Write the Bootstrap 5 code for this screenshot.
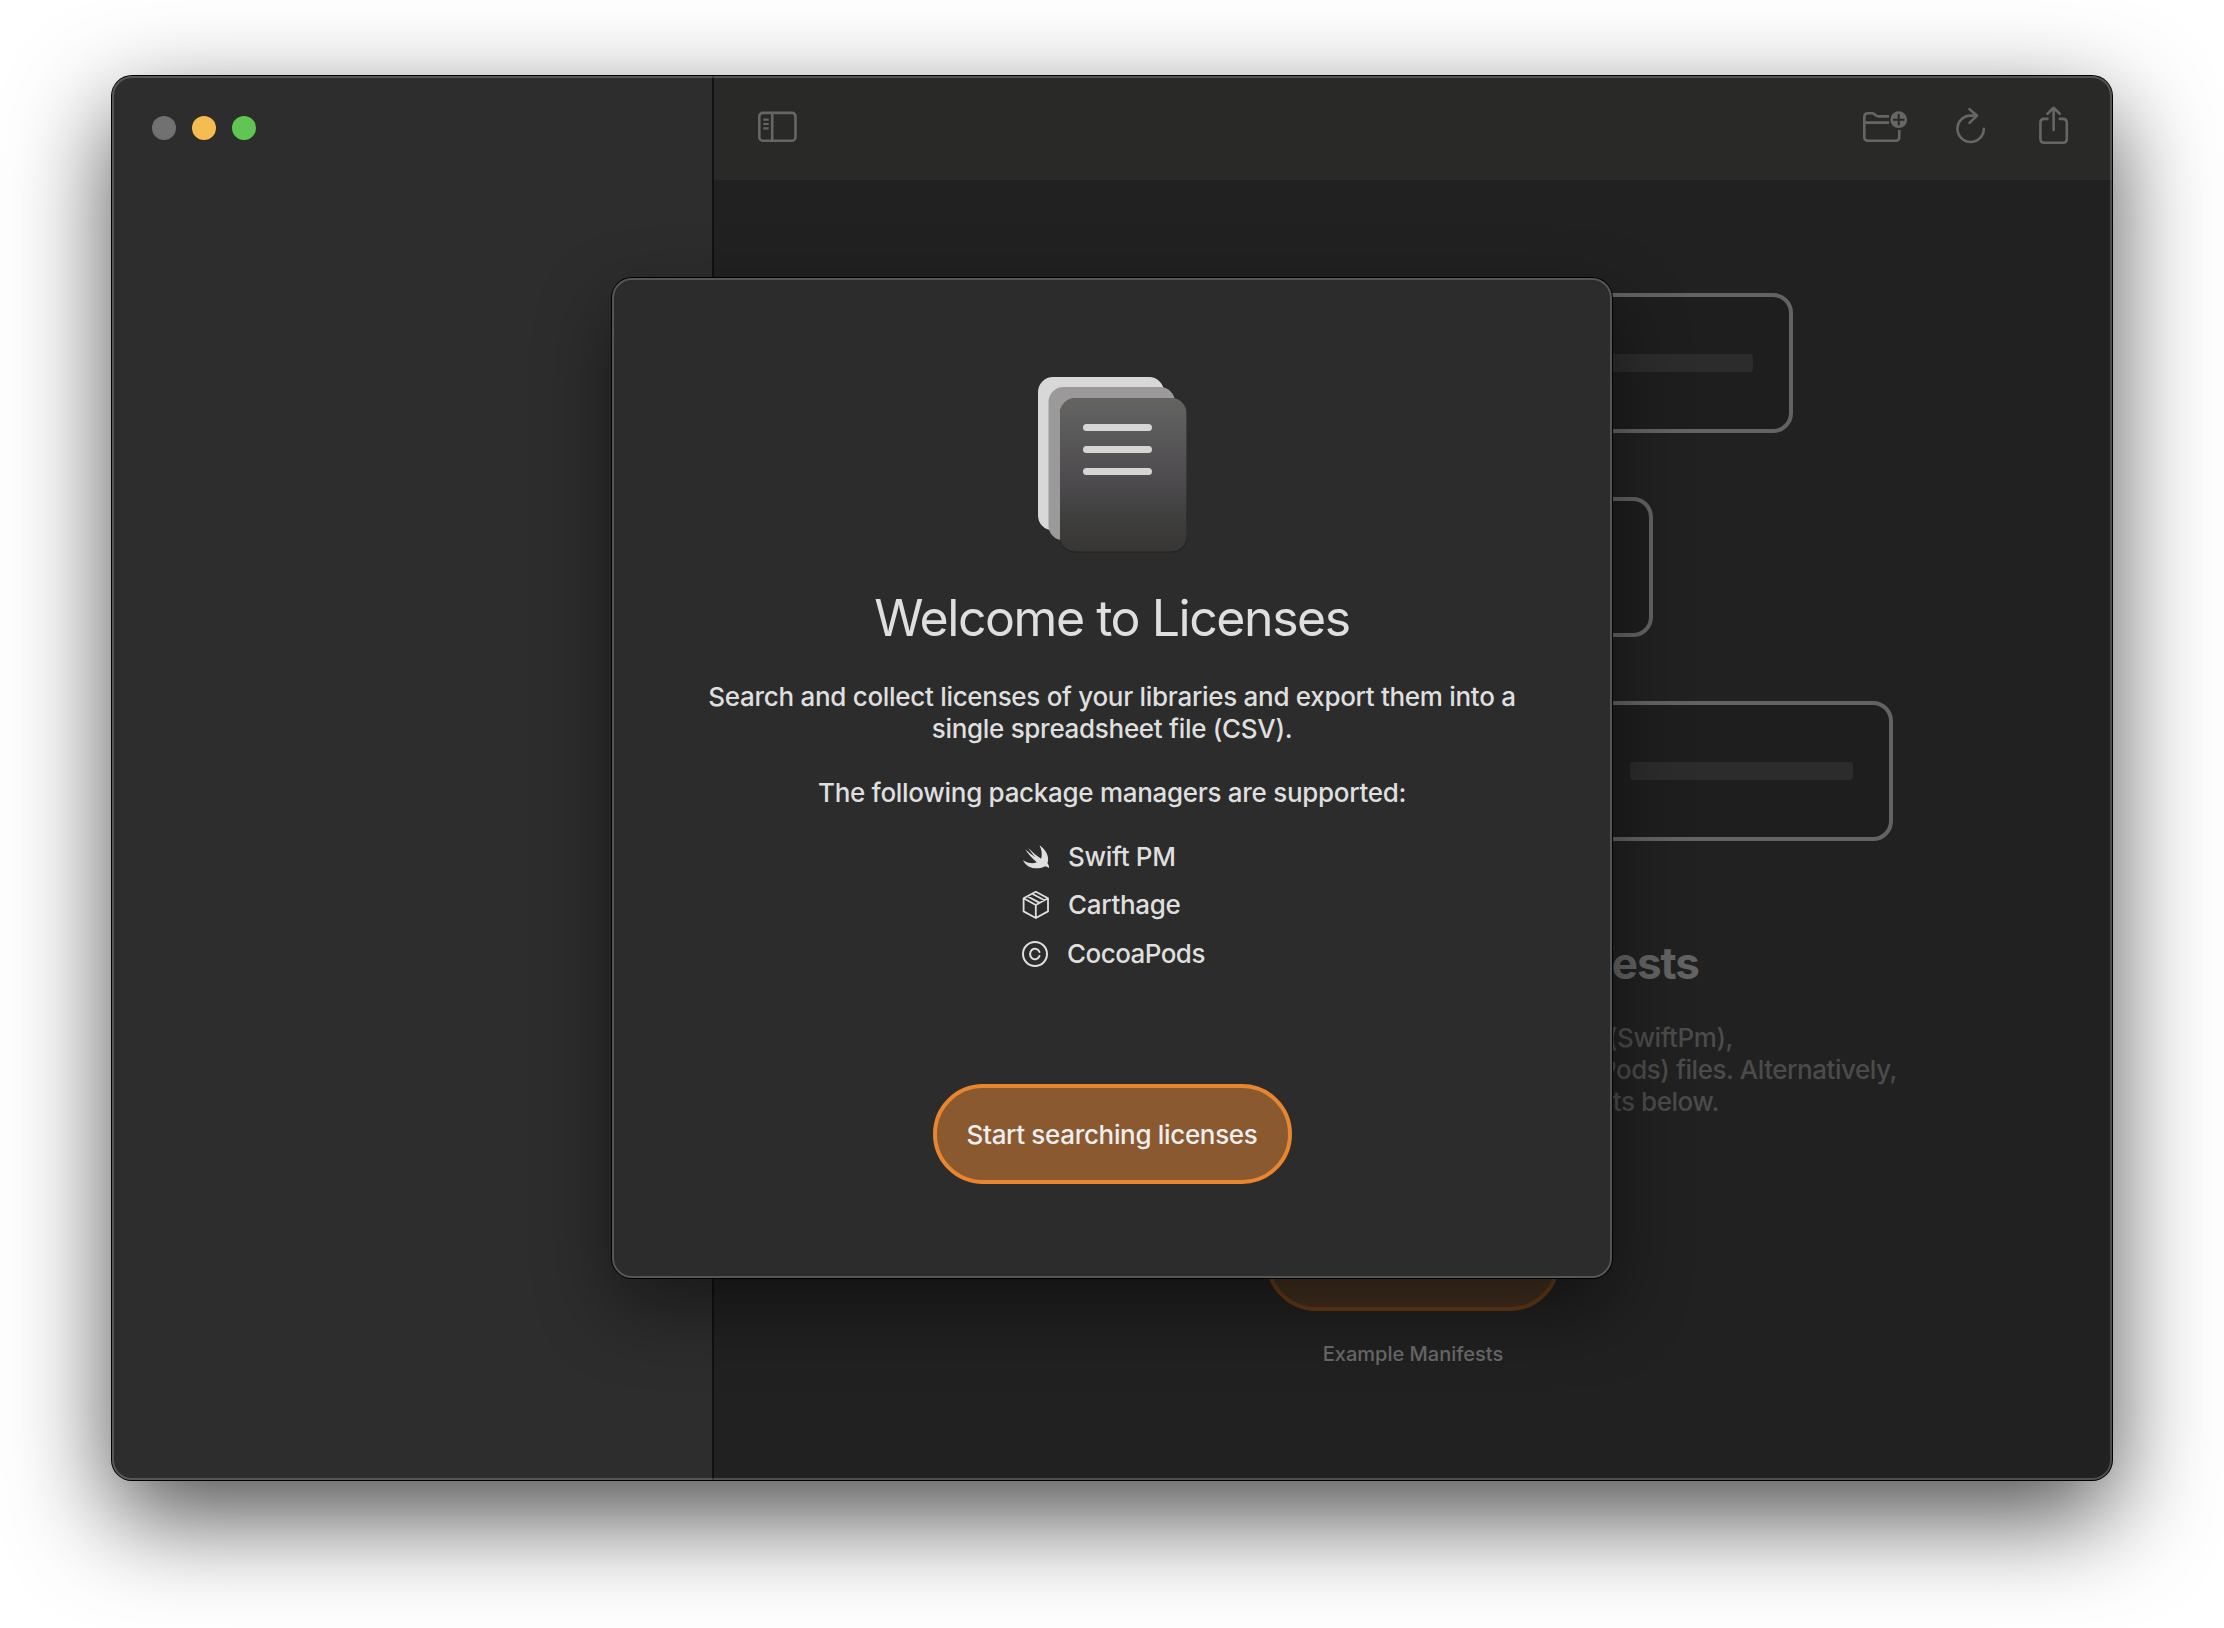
<!DOCTYPE html>
<html lang="en">
<head>
<meta charset="utf-8">
<title>Licenses</title>
<link rel="stylesheet" href="https://cdn.jsdelivr.net/npm/bootstrap@5.3.0/dist/css/bootstrap.min.css">
<script src="https://cdn.jsdelivr.net/npm/bootstrap@5.3.0/dist/js/bootstrap.bundle.min.js"></script>
<style>
body{background:#fff;font-family:Inter,"Liberation Sans",sans-serif;width:2224px;height:1628px;padding:76px 112px 148px;font-size:26px;line-height:32px;font-weight:450;letter-spacing:-.3px}
svg{display:block}
.app-window{width:2000px;height:1404px;border-radius:20px;background:#212121;box-shadow:0 0 0 1px #000,0 36px 100px rgba(0,0,0,.7)}
.app-clip{border-radius:20px}
.app-window::after,.sheet::after{content:"";position:absolute;inset:0;border-radius:inherit;border:2px solid rgba(255,255,255,.2);pointer-events:none}
.sidebar{width:602px;background:#2d2d2d;border-right:2px solid #111;padding:40px}
.light{width:24px;height:24px;border-radius:50%}
.light-close{background:#717171}
.light-min{background:#f5bd4f}
.light-max{background:#61c554}
.toolbar{height:104px;background:#292927;padding:0 40px 0 42px;color:#666}
.ph{height:140px;border:4px solid #636363;border-radius:20px;background:#1e1e1e;padding:0 36px}
.ph i{height:18px;width:223px;border-radius:3px;background:#2c2c2c}
.stack{padding-top:113px;gap:64px}
.d-title{font-size:44px;line-height:52px;font-weight:700;color:#636363;width:572px;letter-spacing:-1px;margin-top:96px}
.d-copy{color:#4b4b4b;margin-top:33px;letter-spacing:-.45px}
.d-btn{width:294px;height:100px;border-radius:50px;border:4px solid #693c18;background:#43301f;margin-top:93px}
.d-cap{font-size:20px;line-height:26px;color:#6a6a6a;font-weight:500;letter-spacing:0;margin-top:30px}
.sheet{left:500px;top:202px;width:1000px;height:1000px;border-radius:20px;background:#2c2c2c;color:#dfdfdf;box-shadow:0 0 0 1px #000,0 30px 76px rgba(0,0,0,.45);padding-top:94px}
.sheet h1{font-size:50px;line-height:60px;font-weight:400;letter-spacing:-1.45px;margin:32px 0 33px}
.supported{margin-top:32px}
.managers{margin-top:32px;gap:16px;width:180px}
.managers>:last-child{margin-top:1px;letter-spacing:-.55px}
.start{width:359px;height:100px;border-radius:50px;border:4px solid #e8862f;background:#8a5930;color:#eee;font-size:26px;font-weight:450;letter-spacing:-.33px;padding:0;margin-top:114px}
</style>
</head>
<body>
<div class="app-window position-relative">
  <div class="app-clip d-flex h-100 overflow-hidden">
    <aside class="sidebar flex-shrink-0 d-flex gap-3">
      <span class="light light-close"></span>
      <span class="light light-min"></span>
      <span class="light light-max"></span>
    </aside>
    <main class="flex-grow-1 d-flex flex-column">
      <header class="toolbar d-flex justify-content-between">
        <svg width="44" height="104" viewBox="756 76 44 104" fill="none" stroke="currentColor" stroke-width="2.6"><rect x="759.3" y="112.9" width="36.2" height="27.8" rx="3.5"/><path d="M772.2 113v27.5"/><path stroke-width="2.2" d="M763.3 119.7h5.400M763.3 124h5.400M763.3 128.300h5.400"/></svg>
        <svg width="216" height="104" viewBox="1856 76 216 104" fill="none" stroke="currentColor" stroke-width="2.6" stroke-linecap="round" stroke-linejoin="round">
          <path stroke-linecap="butt" d="M1889 116.4h-10.5q-1.500 0-2.600-1l-1.400-1.200q-1-.9-2.500-.9h-4q-3.700 0-3.700 3.700v19.900q0 3.800 3.800 3.800h27.400q3.800 0 3.800-3.800v-6.900M1864.500 122.600h24.500"/>
          <circle cx="1898.700" cy="119.700" r="8.400" fill="currentColor" stroke="none"/><path stroke="#292927" stroke-width="2" d="M1893.800 119.700h9.800M1898.700 114.800v9.800"/>
          <path d="M1977 115.600h-6.500a13.200 13.200 0 1 0 13.300 13.200M1969.500 109.200l7.500 6.400-7.500 7.300"/>
          <path stroke-linecap="butt" d="M2048.500 118.900h-4.200q-3.900 0-3.900 3.900v16q0 3.900 3.900 3.900h18.600q3.900 0 3.900-3.900v-16q0-3.900-3.900-3.900h-4.200"/>
          <path d="M2053.600 130v-21.500M2047.500 113.800l6.100-6 6.100 6"/>
        </svg>
      </header>
      <div class="stack d-flex flex-column align-items-center">
        <div class="ph d-flex align-items-center justify-content-end" style="width:760px"><i></i></div>
        <div class="ph d-flex align-items-center justify-content-start" style="width:480px"><i></i></div>
        <div class="ph d-flex align-items-center justify-content-end" style="width:960px"><i></i></div>
      </div>
      <div class="d-flex flex-column align-items-center text-end text-nowrap">
        <div class="d-title">Drop manifests</div>
        <div class="d-copy d-flex flex-column align-items-center">
          <div style="width:640px">Drop your Package.resolved (SwiftPm),</div>
          <div style="width:968px">Cartfile (Carthage) or Podfile (CocoaPods) files. Alternatively,</div>
          <div style="width:612px">try the example manifests below.</div>
        </div>
        <div class="d-btn"></div>
        <div class="d-cap">Example Manifests</div>
      </div>
    </main>
  </div>
  <section class="sheet position-absolute d-flex flex-column align-items-center text-center">
    <svg width="160" height="184" viewBox="1032 372 160 184">
      <defs><linearGradient id="g" x1="0" y1="0" x2="0" y2="1"><stop offset="0" stop-color="#646460"/><stop offset=".13" stop-color="#5f5e5f"/><stop offset=".6" stop-color="#4a484a"/><stop offset=".8" stop-color="#3e3e3c"/><stop offset="1" stop-color="#373634"/></linearGradient></defs>
      <rect x="1038" y="377" width="126" height="153.500" rx="15" fill="#d8d8d8"/>
      <rect x="1048.500" y="387" width="126.500" height="153.500" rx="15" fill="#9b999a"/>
      <rect x="1060" y="398.500" width="127" height="154" rx="15" fill="#222"/>
      <rect x="1060" y="398" width="126.500" height="153.500" rx="15" fill="url(#g)"/>
      <path d="M1086.500 427.500h62M1086.500 449.500h62M1086.500 471.500h62" stroke="#d6d5d4" stroke-width="7" stroke-linecap="round"/>
    </svg>
    <h1>Welcome to Licenses</h1>
    <div class="text-nowrap">Search and collect licenses of your libraries and export them into a<br>single spreadsheet file (CSV).</div>
    <div class="supported">The following package managers are supported:</div>
    <div class="managers d-flex flex-column align-items-start">
      <div class="d-flex align-items-center text-nowrap"><svg width="46" height="32" viewBox="1022 841 46 32"><path fill="#dfdfdf" d="M1039.500 845.300c6.500 4.500 10.300 11.500 8 18 1.500 2 2 4.500 1.200 4.600-1.200-1-2.500-1.900-4.700-1.200-7 3.500-17.500 1.500-21-6.500 4.500 3 9.800 4 13.800 2-4.800-3.800-8.700-8.500-11.600-13 3.500 3.200 7.200 6 10.200 8-2.600-2.800-5.400-6.400-7.200-9.200 4.200 4.300 8.700 8 13 10.800 1.200-4.300 .5-9-1.700-13.500z"/></svg>Swift PM</div>
      <div class="d-flex align-items-center text-nowrap"><svg width="46" height="32" viewBox="1022 889 46 32" fill="none" stroke="#dfdfdf" stroke-width="1.800" stroke-linejoin="round"><path d="M1035.800 891.800l12.200 6.400v13.200l-12.200 6.600-12.200-6.600v-13.200zM1023.600 898.200l12.200 6.800 12.200-6.800M1035.800 905v13M1027.400 896.200l12.200 6.700M1032.200 893.800l12.200 6.500"/></svg>Carthage</div>
      <div class="d-flex align-items-center text-nowrap"><svg width="45" height="32" viewBox="1022 938 45 32" fill="none" stroke="#dfdfdf" stroke-width="2"><circle cx="1035" cy="954" r="12"/><path stroke-linecap="round" d="M1039.500 952a4.900 5.300 0 1 0 0 4"/></svg>CocoaPods</div>
    </div>
    <button class="btn start">Start searching licenses</button>
  </section>
</div>
</body>
</html>
